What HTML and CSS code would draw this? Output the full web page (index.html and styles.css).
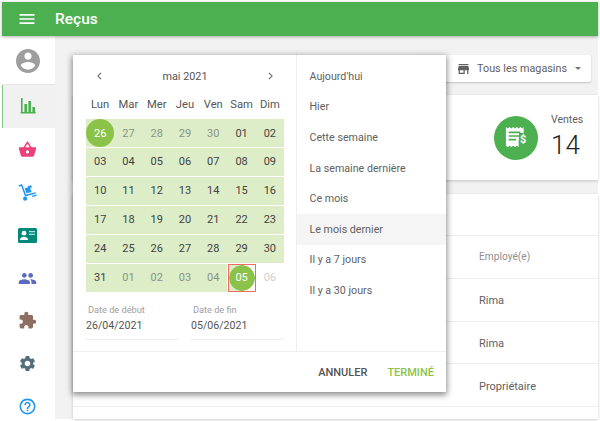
FILE: index.html
```html
<!DOCTYPE html>
<html lang="fr">
<head>
<meta charset="utf-8">
<title>Reçus</title>
<link rel="stylesheet" href="styles.css">
</head>
<body>
<div class="app">
  <header class="topbar">
    <svg class="menu-icon" viewBox="0 0 24 24"><path d="M3 18h18v-2H3v2zm0-5h18v-2H3v2zm0-7v2h18V6H3z"/></svg>
    <h1 class="title">Reçus</h1>
  </header>
  <div class="shell">
    <nav class="sidebar">
      <div class="side-user">
        <svg class="ico-avatar" viewBox="2 2 20 20"><path d="M12 2C6.480 2 2 6.480 2 12s4.480 10 10 10 10-4.480 10-10S17.520 2 12 2zm0 3c1.660 0 3 1.340 3 3s-1.340 3-3 3-3-1.340-3-3 1.340-3 3-3zm0 14.200c-2.500 0-4.710-1.280-6-3.220.03-1.990 4-3.080 6-3.080 1.990 0 5.970 1.090 6 3.080-1.290 1.940-3.500 3.220-6 3.220z"/></svg>
      </div>
      <div class="side-item active">
        <svg class="ico ico-chart" viewBox="0 0 16 16"><path d="M1 0h1.600v14H1zM0.600 14h15v1.600H.6zM4.400 6H7v8H4.400zM8.400 3H11v11H8.400zM12.400 9H15v5h-2.600z"/></svg>
      </div>
      <div class="side-item">
        <svg class="ico ico-basket" viewBox="0 0 24 24"><path d="M17.210 9l-4.380-6.560c-.19-.28-.51-.42-.83-.42-.32 0-.64.14-.83.43L6.790 9H2c-.55 0-1 .45-1 1 0 .09.01.18.04.27l2.540 9.270c.23.84 1 1.460 1.920 1.460h13c.92 0 1.690-.62 1.930-1.460l2.540-9.270L23 10c0-.55-.45-1-1-1h-4.790zM9 9l3-4.400L15 9H9zm3 8c-1.100 0-2-.9-2-2s.9-2 2-2 2 .9 2 2-.9 2-2 2z"/></svg>
      </div>
      <div class="side-item">
        <svg class="ico ico-cart" viewBox="0 0 20 18"><path d="M.6 1.200L4.300 0l.4 1.200 3.700 9.800 10.200-2.300.3 1.400-11.500 3.100L3.400 2 1 2.800z"/><path d="M7 4.600l5.400-1.500 1.900 5.300-5.400 1.400z"/><path d="M10 2.400L14 1.300l.7 2.300-3.900 1z"/><circle cx="7.500" cy="15.500" r="2.200"/><path d="M14.500 12.400l5-1.300.3 1.300-4.400 1.300z"/></svg>
      </div>
      <div class="side-item">
        <svg class="ico-card" viewBox="0 0 19 15"><rect width="19" height="15" rx="1.500" fill="#00897b"/><circle cx="6" cy="5.200" r="2.400" fill="#fff"/><path d="M1.800 12c0-2.200 2.600-3.200 4.200-3.200s4.200 1 4.200 3.200z" fill="#fff"/><path d="M11 3h6v1.300h-6zM11 5.800h6v1.300h-6z" fill="#b2dfdb"/></svg>
      </div>
      <div class="side-item">
        <svg class="ico ico-people" viewBox="0 0 24 24"><path d="M16 11c1.660 0 2.990-1.340 2.990-3S17.660 5 16 5c-1.660 0-3 1.340-3 3s1.340 3 3 3zm-8 0c1.660 0 2.990-1.340 2.990-3S9.660 5 8 5C6.340 5 5 6.340 5 8s1.340 3 3 3zm0 2c-2.330 0-7 1.170-7 3.500V19h14v-2.500c0-2.330-4.670-3.500-7-3.500zm8 0c-.29 0-.62.02-.97.05 1.160.84 1.970 1.970 1.970 3.450V19h6v-2.500c0-2.330-4.670-3.500-7-3.500z"/></svg>
      </div>
      <div class="side-item">
        <svg class="ico ico-puzzle" viewBox="0 0 24 24"><path d="M20.500 11H19V7c0-1.100-.9-2-2-2h-4V3.500C13 2.120 11.880 1 10.500 1S8 2.120 8 3.500V5H4c-1.100 0-1.990.9-1.990 2v3.800H3.500c1.490 0 2.700 1.210 2.700 2.700s-1.210 2.700-2.700 2.700H2V20c0 1.100.9 2 2 2h3.800v-1.500c0-1.490 1.210-2.700 2.700-2.700 1.490 0 2.700 1.210 2.700 2.700V22H17c1.100 0 2-.9 2-2v-4h1.500c1.380 0 2.500-1.120 2.500-2.500S21.880 11 20.500 11z"/></svg>
      </div>
      <div class="side-item">
        <svg class="ico ico-gear" viewBox="0 0 24 24"><path d="M19.140 12.940c.04-.3.06-.61.06-.94 0-.32-.02-.64-.07-.94l2.030-1.580c.18-.14.23-.41.12-.61l-1.920-3.320c-.12-.22-.37-.29-.59-.22l-2.390.96c-.5-.38-1.030-.7-1.620-.94l-.36-2.540c-.04-.24-.24-.41-.48-.41h-3.840c-.24 0-.43.17-.47.41l-.36 2.540c-.59.24-1.130.57-1.620.94l-2.390-.96c-.22-.08-.47 0-.59.22L2.740 8.870c-.12.21-.08.47.12.61l2.030 1.580c-.05.3-.09.63-.09.94s.02.64.07.94l-2.030 1.580c-.18.14-.23.41-.12.61l1.920 3.320c.12.22.37.29.59.22l2.390-.96c.5.38 1.030.7 1.620.94l.36 2.540c.05.24.24.41.48.41h3.840c.24 0 .44-.17.47-.41l.36-2.540c.59-.24 1.130-.56 1.620-.94l2.390.96c.22.08.47 0 .59-.22l1.920-3.320c.12-.22.07-.47-.12-.61l-2.010-1.580zM12 15.600c-1.980 0-3.600-1.620-3.600-3.600s1.620-3.600 3.600-3.600 3.600 1.620 3.600 3.600-1.620 3.600-3.600 3.600z"/></svg>
      </div>
      <div class="side-item">
        <svg class="ico ico-help" viewBox="0 0 24 24"><path d="M11 18h2v-2h-2v2zm1-16C6.480 2 2 6.480 2 12s4.480 10 10 10 10-4.480 10-10S17.520 2 12 2zm0 18c-4.410 0-8-3.590-8-8s3.590-8 8-8 8 3.590 8 8-3.590 8-8 8zm0-14c-2.210 0-4 1.790-4 4h2c0-1.100.9-2 2-2s2 .9 2 2c0 2-3 1.750-3 5h2c0-2.250 3-2.500 3-5 0-2.210-1.790-4-4-4z"/></svg>
      </div>
    </nav>
    <main class="content">
      <div class="filters">
        <button class="store-btn">
          <svg class="store-ico" viewBox="3 4 18 16"><path d="M20 4H4v2h16V4zm1 10v-2l-1-5H4l-1 5v2h1v6h10v-6h4v6h2v-6h1zm-9 4H6v-4h6v4z"/></svg>
          <span>Tous les magasins</span>
          <i class="caret"></i>
        </button>
      </div>
      <section class="card stats">
        <div class="stat-circle">
          <svg class="stat-ico" viewBox="0 0 22 25"><path d="M1 1l2 1.600L5 1l2 1.600L9 1l2 1.600L13 1l2 1.600L17 1l2 1.600L20.500 1v14h-5.500v8l-2-1.500-2 1.500-2-1.500-2 1.500-2-1.500-2 1.500-2-1.500z" fill="#fff"/><path d="M4 6h13v1.800H4zM4 10h13v1.800H4zM4 14h8v1.800H4z" fill="#4caf50"/></svg>
          <span class="stat-dollar">$</span>
        </div>
        <div class="stat-text">
          <div class="stat-label">Ventes</div>
          <div class="stat-value">14</div>
        </div>
      </section>
      <section class="card table">
        <div class="row row-top"></div>
        <div class="row head"><span>Employé(e)</span></div>
        <div class="row"><span>Rima</span></div>
        <div class="row"><span>Rima</span></div>
        <div class="row"><span>Propriétaire</span></div>
      </section>
    </main>
  </div>

  <div class="dialog">
    <div class="dialog-body">
      <div class="calendar">
        <div class="cal-nav">
          <svg class="chev" viewBox="0 0 6 10"><path d="M5 1L1 5l4 4"/></svg>
          <span>mai 2021</span>
          <svg class="chev" viewBox="0 0 6 10"><path d="M1 1l4 4-4 4"/></svg>
        </div>
        <div class="week days"><span>Lun</span><span>Mar</span><span>Mer</span><span>Jeu</span><span>Ven</span><span>Sam</span><span>Dim</span></div>
        <div class="weeks">
          <div class="week range"><span class="cap">26</span><span class="out">27</span><span class="out">28</span><span class="out">29</span><span class="out">30</span><span>01</span><span>02</span></div>
          <div class="week range"><span>03</span><span>04</span><span>05</span><span>06</span><span>07</span><span>08</span><span>09</span></div>
          <div class="week range"><span>10</span><span>11</span><span>12</span><span>13</span><span>14</span><span>15</span><span>16</span></div>
          <div class="week range"><span>17</span><span>18</span><span>19</span><span>20</span><span>21</span><span>22</span><span>23</span></div>
          <div class="week range"><span>24</span><span>25</span><span>26</span><span>27</span><span>28</span><span>29</span><span>30</span></div>
          <div class="week last"><span class="in">31</span><span class="in out">01</span><span class="in out">02</span><span class="in out">03</span><span class="in out">04</span><span class="cap end">05</span><span class="off">06</span></div>
        </div>
        <div class="dates">
          <div class="date-field"><label>Date de début</label><div class="date-value">26/04/2021</div></div>
          <div class="date-field"><label>Date de fin</label><div class="date-value">05/06/2021</div></div>
        </div>
      </div>
      <ul class="presets">
        <li>Aujourd'hui</li>
        <li>Hier</li>
        <li>Cette semaine</li>
        <li>La semaine dernière</li>
        <li>Ce mois</li>
        <li class="current">Le mois dernier</li>
        <li>Il y a 7 jours</li>
        <li>Il y a 30 jours</li>
      </ul>
    </div>
    <div class="dialog-foot">
      <button class="btn-cancel">ANNULER</button>
      <button class="btn-done">TERMINÉ</button>
    </div>
  </div>
</div>
</body>
</html>
```
FILE: styles.css
```css
* { box-sizing: border-box; }
html, body { margin: 0; padding: 0; height: 100%; overflow: hidden; background: #fff; }
body { font-family: Roboto, "Liberation Sans", sans-serif; color: #424242; }
.app { position: relative; width: 600px; height: 421px; padding: 2px; background: #fff; display: flex; flex-direction: column; overflow: hidden; }

.topbar { height: 34px; flex: none; background: #4caf50; display: flex; align-items: center; padding: 0 0 1px 15px; box-shadow: 0 1px 3px rgba(0,0,0,.3); position: relative; z-index: 2; }
.menu-icon { width: 20px; height: 20px; fill: #fff; }
.title { margin: 0 0 0 18px; font-size: 15.5px; font-weight: 500; color: #fff; }

.shell { flex: 1; display: flex; background: #f2f2f2; min-height: 0; }
.sidebar { width: 53px; flex: none; background: #fff; display: flex; flex-direction: column; }
.side-user { height: 49px; flex: none; display: flex; align-items: center; justify-content: center; padding-right: 2px; border-bottom: 1px solid #e6e6e6; }
.ico-avatar { width: 24px; height: 24px; fill: #9e9e9e; margin-top: 1px; }
.side-item { height: 42.9px; flex: none; display: flex; align-items: center; justify-content: center; padding-right: 2px; }
.side-item.active { background: #f1f1f1; border-left: 1px solid #81c784; padding-right: 3px; }
.ico { width: 19px; height: 19px; }
.ico-chart { width: 16px; height: 16px; fill: #4caf50; }
.ico-basket { fill: #ec407a; }
.ico-cart { fill: #2196f3; width: 19px; height: 17px; }
.ico-card { width: 19px; height: 15px; }
.ico-people { fill: #5c6bc0; }
.ico-puzzle { fill: #8d6e63; }
.ico-gear { fill: #546e7a; }
.ico-help { fill: #2196f3; }

.content { flex: 1; min-width: 0; padding: 19px 0 0 18px; display: flex; flex-direction: column; }
.filters { height: 27px; flex: none; display: flex; justify-content: flex-end; padding-right: 7px; }
.store-btn { width: 175px; height: 27px; border: 0; border-radius: 2px; background: #fff; box-shadow: 0 1px 2px rgba(0,0,0,.2); display: flex; align-items: center; justify-content: flex-end; gap: 8px; padding: 0 10px; font: 400 10.8px Roboto, sans-serif; color: #616161; }
.store-ico { width: 11px; height: 10px; fill: #616161; }
.caret { width: 0; height: 0; border: 3px solid transparent; border-top-color: #757575; border-bottom-width: 0; }

.card { background: #fff; box-shadow: 0 1px 3px rgba(0,0,0,.2); }
.stats { height: 85px; flex: none; margin-top: 13px; display: flex; align-items: center; justify-content: flex-end; }
.stat-circle { position: relative; width: 44px; height: 44px; border-radius: 50%; background: #4caf50; display: flex; align-items: center; justify-content: center; }
.stat-ico { width: 20px; height: 23px; margin-right: 2px; }
.stat-dollar { position: absolute; left: 25px; top: 17px; padding: 0 1px; background: #4caf50; color: #fff; font-size: 11px; font-weight: 700; line-height: 14px; }
.stat-text { width: 47px; margin-left: 13px; padding-bottom: 2px; }
.stat-label { font-size: 10.5px; color: #616161; line-height: 14px; }
.stat-value { font-size: 26px; font-weight: 300; color: #212121; line-height: 30px; margin-top: 3px; }

.table { flex: 1; margin-top: 14px; min-height: 0; }
.row { height: 42.8px; display: flex; align-items: center; padding: 2px 0 0 406px; border-bottom: 1px solid #eee; font-size: 11px; color: #616161; }
.row.head { font-size: 10.2px; color: #8e8e8e; padding-top: 0; }
.row-top { height: 42px; }

.dialog { position: absolute; left: 73px; top: 55px; width: 373px; height: 337px; background: #fff; box-shadow: 0 2px 6px 1px rgba(0,0,0,.45); display: flex; flex-direction: column; z-index: 5; }
.dialog-body { height: 296px; flex: none; display: flex; }
.calendar { width: 224px; flex: none; border-right: 1px solid #eee; padding: 0 12px 0 13px; }
.cal-nav { height: 41px; display: flex; align-items: center; justify-content: space-between; padding: 1px 11px 0; font-size: 10.8px; color: #555; }
.chev { width: 5px; height: 8px; fill: none; stroke: #616161; stroke-width: 1.3; }
.week { display: grid; grid-template-columns: repeat(7, 1fr); align-items: center; text-align: center; font-size: 11px; color: #424242; }
.days { height: 23px; padding-bottom: 7px; font-size: 11.2px; color: #555; }
.weeks { display: grid; grid-auto-rows: 27.5px; row-gap: 1.5px; }
.range { background: #dcedc8; height: 100%; }
.last { height: 100%; }
.week span { display: flex; align-items: center; justify-content: center; height: 100%; }
.week .in { background: #dcedc8; }
.week .out { color: #8b9284; }
.week .off { color: #cfcfcf; }
.week .cap { background: #8bc34a; color: #fff; border-radius: 50%; height: 28px; width: 28px; justify-self: center; }
.week .end { border-radius: 0; border: 1px solid #ef6c60; background: radial-gradient(circle closest-side, #8bc34a 96%, transparent 100%), linear-gradient(90deg, #dcedc8 50%, #fff 50%); height: 100%; }
.dates { display: flex; justify-content: space-between; margin-top: 12px; }
.date-field { width: 93px; height: 36px; border-bottom: 1px solid #eee; }
.date-field label { display: block; font-size: 9.2px; line-height: 12px; color: #9e9e9e; padding-left: 2px; }
.date-value { font-size: 10.6px; line-height: 14px; margin-top: 3px; color: #555; }
.presets { list-style: none; margin: 0; padding: 6px 0 0; flex: 1; }
.presets li { height: 30.6px; display: flex; align-items: center; padding-left: 12.5px; font-size: 10.7px; color: #616161; }
.presets .current { background: #f5f5f5; }
.dialog-foot { flex: 1; border-top: 1px solid #eee; display: flex; align-items: center; justify-content: flex-end; gap: 20px; padding-right: 12px; }
.dialog-foot button { border: 0; background: none; padding: 0; font: 500 11px Roboto, sans-serif; }
.btn-cancel { color: #555; }
.btn-done { color: #8bc34a; }
```
